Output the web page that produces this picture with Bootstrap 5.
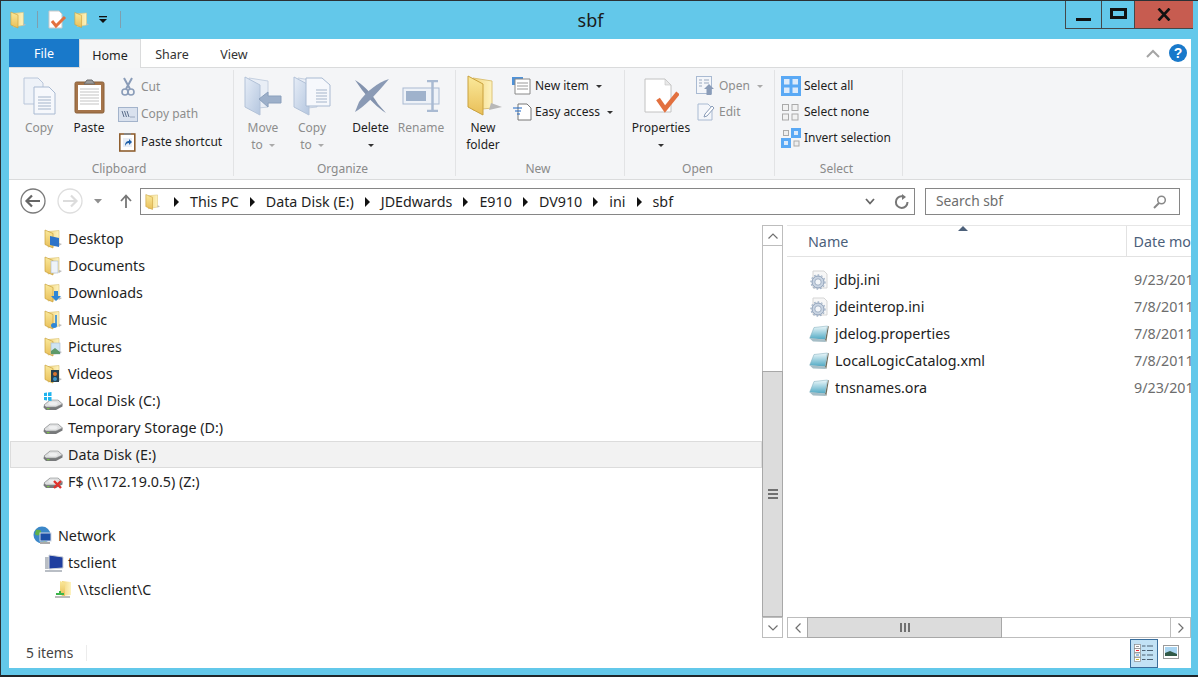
<!DOCTYPE html>
<html lang="en"><head><meta charset="utf-8"><title>sbf</title>
<link rel="stylesheet" href="https://cdn.jsdelivr.net/npm/bootstrap@5.3.0/dist/css/bootstrap.min.css">
<style>
html,body{margin:0;height:100%;overflow:hidden}
body{background:#63c8ea;font-family:"Noto Sans",sans-serif;color:#1e1e1e;font-size:12px}
svg{display:block;flex:none}
.wfr{width:1198px;height:677px;border-top:1px solid #2b3034;border-bottom:2px solid #20262a;border-left:1px solid #2b3034;padding:0 0 7px 8px}
.ttl{height:38px;padding-left:1px}
.qat{width:1055px}
.qsep{width:1px;height:17px;background:#7f9fae;margin-top:-1px}
.q1{margin-left:11px}.q2{margin-left:9px}.q3{margin-left:5px}.q4{margin-left:10px}.q5{margin-left:12px}
.ttxt{font-size:18px;color:#1b1b1b;width:1055px;text-align:center;margin-left:-1055px;padding-left:106px;line-height:38px}
.wb{height:28px;border-bottom:1px solid #44484a;border-left:1px solid #44484a;margin-top:-10px;margin-bottom:auto}
.wbm{width:36px}.wbx{width:33px}.wbc{width:59px;background:#c75c50}
.cli{width:1182px;height:629px;background:#fff}
.tabs{height:29px;border-bottom:1px solid #dadbdc;position:relative}
.tf{width:70px;height:28px;background:#1979ca;color:#fff;text-align:center;line-height:29px;font-size:12.5px}
.th{width:62px;height:29px;background:#f5f6f7;border:1px solid #dadbdc;border-bottom:0;text-align:center;line-height:31px;font-size:12.5px}
.tn{width:62px;text-align:center;line-height:31px;font-size:12.5px;color:#333}
.tr1{margin-left:auto;padding-right:4px;gap:9px}
.hlp{width:18px;height:18px;border-radius:50%;background:#1979ca;color:#fff;font:bold 14px/18px "Liberation Sans",sans-serif;text-align:center}
.rib{height:112px;background:#f4f5f7;border-bottom:1px solid #dadbdc}
.grp{border-right:1px solid #e2e3e5;margin:2px 0 3px;height:106px;flex:none}
.g1{width:225px}.g2{width:222px}.g3{width:169px}.g4{width:150px}.g5{width:128px}
.gb{height:90px;padding-top:2px}
.g1 .gb{padding-left:5px}.g2 .gb{padding-left:4px}.g3 .gb,.g4 .gb,.g5 .gb{padding-left:6px}
.g5 .gb{padding-top:3px}
.gl{height:16px;line-height:17px;text-align:center;color:#8a8a8a;font-size:12px;padding-right:4px}
.big{flex:none;text-align:center;line-height:17px;font-size:12px;color:#1e1e1e}
.big .ic{height:47px;display:flex;align-items:center;justify-content:center}
.dim{color:#8d8d8d}
.caret{display:inline-block;width:0;height:0;border:3px solid transparent;border-top:3px solid #333;border-bottom:0;vertical-align:middle;margin-left:3px}
.dim .caret{border-top-color:#aaa}
.b50{width:50px}.b48{width:48px}.b52{width:51px}.b42{width:42px}.b60{width:60px}
.del{margin-left:9px}
.nfi{margin-left:3px}
.smc{margin-left:4px;margin-top:1px}
.smn{margin-left:8px}.smo{margin-left:5px}
.smr{height:26px;gap:4px;line-height:26px;white-space:nowrap}
.g1 .smr{height:27.5px}
.smi{width:19px;display:flex;justify-content:center}
.adr{height:45px;padding:8px 11px 0 11px}
.abox{width:775px;height:27px;border:1px solid #868686;margin-left:120px;margin-right:10px;font-size:14.3px;padding-left:4px}
.sbox{width:255px;height:27px;border:1px solid #868686;padding:0 12px 0 10px;font-size:13.8px;color:#6d6d6d}
.cr{gap:11px;padding-left:14px}
.arw{width:0;height:0;border:5px solid transparent;border-left:5px solid #111;border-right:0}
.crt{margin-right:19px}
.nvb{position:absolute}
.nfw{margin-left:11px}.ndd{margin-left:11px}.nup{margin-left:18px}
.mid{height:413px}
.npn{width:753px;font-size:14.3px;color:#1e1e1e}
.nr{height:27px;width:752px;line-height:26px;padding-left:33px;white-space:nowrap;border:1px solid transparent;margin-left:1px}
.nic{width:24px;flex:none}
.nr.sl{background:#f2f2f2;border-color:#dcdcdc}
.nr.l0{padding-left:22px}
.nr.l0 .nic{width:25px}
.nr.l2{padding-left:43px}
.nr.gp{margin-top:27px}
.drv{margin-left:-1px}
.vsc{width:21px;height:413px}
.sbt{border:1px solid #bdbdbd;background:#fff;display:flex;align-items:center;justify-content:center;flex:none}
.vsb{width:21px;height:21px}
.vtr{height:125px;border-left:1px solid #bdbdbd;border-right:1px solid #bdbdbd}
.vth{height:247px;background:#dcdcdc;border:1px solid #a8a8a8;display:flex;align-items:center;justify-content:center}
.fpn{width:405px;margin-left:4px;overflow:hidden;font-size:14.3px}
.fhd{height:32px;border-top:1px solid #e6e6e6;border-bottom:1px solid #e2e2e2;position:relative;color:#4c607a}
.hn{width:341px;padding-left:21px;line-height:31px;border-right:1px solid #e2e2e2;height:30px}
.hd{padding-left:7px;line-height:31px;white-space:nowrap}
.srt{position:absolute;left:171px;top:0;width:0;height:0;border:5px solid transparent;border-top:0;border-bottom:5px solid #4c607a}
.fls{height:360px;padding-top:9px}
.fr{height:27px;line-height:26px;white-space:nowrap;color:#1e1e1e}
.fi{width:48px;padding-left:22px;flex:none}
.fnm{width:299px;flex:none}
.fdt{color:#6d6d6d}
.hsc{height:21px}
.hsb{width:21px;height:21px}
.hth{width:195px;height:21px;background:#dcdcdc;border:1px solid #a8a8a8;margin-left:-1px;display:flex;align-items:center;justify-content:center}
.htr{flex:1;border-top:1px solid #bdbdbd;border-bottom:1px solid #bdbdbd}
.grh{gap:2px}
.gr{width:2px;height:9px;background:#707070}
.gh{width:10px;height:2px;background:#707070}
.sts{height:30px;font-size:13.8px;color:#444;padding-left:17px}
.sit{width:60px;line-height:27px;height:29px}
.ssep{width:1px;height:16px;background:#ececec}
.vdt{width:28px;height:29px;background:#c2e2f5;border:1px solid #3a6e9c;display:flex;align-items:center;justify-content:center;margin-left:auto}
.vlg{width:26px;display:flex;justify-content:center;align-items:center;margin-right:7px;margin-top:-3px}
</style></head><body>
<svg width="0" height="0" style="position:absolute"><defs>
<linearGradient id="fg" x1="0" y1="0" x2="0" y2="1"><stop offset="0" stop-color="#fae99b"/><stop offset="1" stop-color="#e9bf58"/></linearGradient>
<linearGradient id="fb" x1="0" y1="0" x2="1" y2="0"><stop offset="0" stop-color="#f3d57a"/><stop offset="1" stop-color="#fdf3c0"/></linearGradient>
<linearGradient id="bg" x1="0" y1="0" x2="1" y2="1"><stop offset="0" stop-color="#e6edf7"/><stop offset="1" stop-color="#b4c6df"/></linearGradient>
<linearGradient id="ng" x1="0" y1="0" x2="0" y2="1"><stop offset="0" stop-color="#eef8fa"/><stop offset="1" stop-color="#4fa9c4"/></linearGradient>
<symbol id="fold" viewBox="0 0 18 20"><path d="M4 2.5 15 1.5V16L4 18Z" fill="url(#fb)" stroke="#e0c77c" stroke-width=".7"/><path d="M1 1 9 4.5V19L1 15.500Z" fill="url(#fg)" stroke="#c9a13e" stroke-width=".7"/><path d="M15 14l3 1-3 2z" fill="#bbb"/></symbol>
<symbol id="drive" viewBox="0 0 20 14"><path d="M1 8 7 3H15L19.500 7V9.500L13 13H3L.5 10.500Z" fill="#77797b"/><path d="M1 8 7 3H15L19.500 7 13 10H3Z" fill="#dfe0e1" stroke="#8b8d8f" stroke-width=".6"/><ellipse cx="10" cy="6.500" rx="4.500" ry="1.800" fill="#eeeff0"/><rect x="4" y="11" width="2.400" height="1.200" fill="#7ac24a"/></symbol>
<symbol id="ini" viewBox="0 0 20 20"><path d="M4 1H15L18 4V18H4Z" fill="#f7f7f7" stroke="#d5d5d5"/><circle cx="9" cy="12" r="6" fill="#c9d4e2" stroke="#8ea0b8"/><circle cx="9" cy="12" r="3.200" fill="#f2f5f9" stroke="#8ea0b8" stroke-width=".8"/><circle cx="9" cy="12" r="7" fill="none" stroke="#9fb0c6" stroke-width="1.300" stroke-dasharray="1.600 2"/></symbol>
<symbol id="note" viewBox="0 0 20 20"><path d="M19 2 19.800 2.400 17.300 18 16 16Z" fill="#6e6a58"/><path d="M5 3.500 18.500 2 16 15.500 .7 14.200Z" fill="url(#ng)" stroke="#79a9b8" stroke-width=".5"/><path d="M.8 14.400 16 15.600 17 18 4 17.500Z" fill="#a5bdc6"/></symbol>
</defs></svg>
<div class="wfr d-flex flex-column">
 <div class="ttl d-flex align-items-center">
  <div class="qat d-flex align-items-center flex-none">
   <svg width="16" height="20"><use href="#fold"/></svg>
   <div class="qsep q1"></div>
   <svg class="q2" width="22" height="20" viewBox="0 0 22 20"><path d="M2 1H12L15 4V18H2Z" fill="#fff" stroke="#c9c9c9"/><path d="M5 11 9 16 18 7" fill="none" stroke="#e2703f" stroke-width="3"/></svg>
   <svg width="15" height="20" class="q3"><use href="#fold"/></svg>
   <svg class="q4" width="9" height="8" viewBox="0 0 9 8"><rect x="0" y="0" width="8" height="1.300" fill="#111"/><path d="M0 3H8L4 7Z" fill="#111"/></svg>
   <div class="qsep q5"></div>
  </div>
  <div class="ttxt">sbf</div>
  <div class="d-flex wb-wrap">
   <div class="wb wbm d-flex align-items-center justify-content-center"><svg width="16" height="18" viewBox="0 0 16 18"><rect x="0" y="12" width="15" height="3" fill="#111"/></svg></div>
   <div class="wb wbx d-flex align-items-center justify-content-center"><svg width="17" height="14" viewBox="0 0 17 14"><rect x="1.500" y="1.500" width="14" height="8" fill="none" stroke="#111" stroke-width="3"/></svg></div>
   <div class="wb wbc d-flex align-items-center justify-content-center"><svg width="14" height="13" viewBox="0 0 14 13"><path d="M1.500 .5 12.500 12.500M12.500 .5 1.500 12.500" stroke="#111" stroke-width="2.600"/></svg></div>
  </div>
 </div>
 <div class="cli d-flex flex-column">
  <div class="tabs d-flex">
   <div class="tf">File</div><div class="th">Home</div><div class="tn">Share</div><div class="tn">View</div>
   <div class="tr1 d-flex align-items-center">
    <svg width="14" height="9" viewBox="0 0 14 9"><path d="M1 8 7 2 13 8" fill="none" stroke="#a5a5a5" stroke-width="2"/></svg>
    <div class="hlp">?</div>
   </div>
  </div>
  <div class="rib d-flex">
   <div class="grp g1"><div class="gb d-flex">
     <div class="big b50 dim"><div class="ic"><svg width="33" height="38" viewBox="0 0 33 38"><path d="M1 1H15L20 6V27H1Z" fill="#eef2f8" stroke="#b9c6da"/><path d="M11 10H26L32 16V37H11Z" fill="#f6f8fc" stroke="#a9bad2"/><path d="M15 20H28M15 23H28M15 26H28M15 29H28M15 32H28" stroke="#a4b4ca"/></svg></div>Copy</div>
     <div class="big b50"><div class="ic"><svg width="31" height="36" viewBox="0 0 31 36"><rect x="1" y="4" width="29" height="31" rx="1.500" fill="#a5744a" stroke="#8a6038"/><rect x="4" y="7" width="23" height="25" fill="#fff"/><path d="M6 11H25M6 14H25M6 17H25M6 20H25M6 23H25M6 26H25" stroke="#c3c3c3"/><path d="M10 6 13 2H18L21 6Z" fill="#9a9a9a" stroke="#6c6c6c"/></svg></div>Paste</div>
     <div class="smc">
      <div class="smr d-flex align-items-center dim"><div class="smi"><svg width="14" height="20" viewBox="0 0 14 20"><path d="M3 1 9 12M11 1 5 12" stroke="#8a9cb8" stroke-width="2"/><circle cx="4" cy="15" r="3" fill="none" stroke="#8a9cb8" stroke-width="1.600"/><circle cx="10" cy="15" r="3" fill="none" stroke="#8a9cb8" stroke-width="1.600"/></svg></div>Cut</div>
      <div class="smr d-flex align-items-center dim"><div class="smi"><svg width="20" height="15" viewBox="0 0 20 15"><rect x=".5" y=".5" width="19" height="14" fill="#d9e1ee" stroke="#a3b3cb"/><path d="M4 4 6 10M6.500 4 8.500 10M9 4 11 10" stroke="#5c6f8c"/><path d="M12.500 10H17" stroke="#5c6f8c" stroke-dasharray="1 1"/></svg></div>Copy path</div>
      <div class="smr d-flex align-items-center"><div class="smi"><svg width="17" height="20" viewBox="0 0 17 20"><rect x=".8" y="2" width="15" height="17" fill="#fff" stroke="#8f5f30" stroke-width="1.600"/><path d="M5 1H12V3H5Z" fill="#888"/><rect x="4" y="6" width="9" height="9" fill="#e8eef7"/><path d="M6 14C6 10 8 9 10 9V7L13 10 10 13V11C8 11 7 12 6 14Z" fill="#1d5fa8"/></svg></div>Paste shortcut</div>
     </div></div><div class="gl">Clipboard</div></div>
   <div class="grp g2"><div class="gb d-flex">
     <div class="big b50 dim"><div class="ic"><svg width="38" height="40" viewBox="0 0 38 40"><path d="M5 2 24 5V31L5 33Z" fill="#e9eef6" stroke="#c5d0e0"/><path d="M1 1 16 9V39L1 31Z" fill="url(#bg)" stroke="#b3c2d8"/><path d="M15 23 24 16V20H37V27H24V31Z" fill="#9db0ca" stroke="#8ba0bc"/></svg></div>Move<br>to <span class="caret"></span></div>
     <div class="big b48 dim"><div class="ic"><svg width="38" height="40" viewBox="0 0 38 40"><path d="M5 2 24 5V31L5 33Z" fill="#e9eef6" stroke="#c5d0e0"/><path d="M1 1 16 9V39L1 31Z" fill="url(#bg)" stroke="#b3c2d8"/><path d="M13 2H29L37 9V30H13Z" fill="#f6f8fc" stroke="#a9bad2"/><path d="M23 14H34M23 17H34M23 20H34M23 23H34M23 26H34" stroke="#a4b4ca"/></svg></div>Copy<br>to <span class="caret"></span></div>
     <div class="big b52 del"><div class="ic"><svg width="38" height="36" viewBox="0 0 38 36"><path d="M3 2C10 6 19 14 26 26L34 35C26 30 17 21 10 12Z" fill="#8393ae"/><path d="M37 1C26 4 14 14 7 24L3 34C12 29 24 16 31 8Z" fill="#8a9ab5"/></svg></div>Delete<br><span class="caret ms-0"></span></div>
     <div class="big b50 dim"><div class="ic"><svg width="38" height="32" viewBox="0 0 38 32"><rect x="1" y="8" width="36" height="16" fill="#eef2f8" stroke="#a9bad2"/><rect x="4" y="11" width="20" height="10" fill="#9fb2cc"/><path d="M25 1H36M25 31H36M30.500 1V31" stroke="#a9bad2" stroke-width="2.500"/></svg></div>Rename</div>
    </div><div class="gl">Organize</div></div>
   <div class="grp g3"><div class="gb d-flex">
     <div class="big b42"><div class="ic"><svg class="nfi" width="36" height="41" viewBox="0 0 36 41"><path d="M6 3 25 6V33L6 35Z" fill="url(#fb)" stroke="#dcc277"/><path d="M1 1 16 9V40L1 32Z" fill="url(#fg)" stroke="#c9a13e"/><path d="M24 28 35 32 22 35Z" fill="#b8b8b8"/></svg></div>New<br>folder</div>
     <div class="smc smn">
      <div class="smr d-flex align-items-center"><div class="smi"><svg width="19" height="18" viewBox="0 0 19 18"><rect x="0" y="0" width="11" height="8" fill="#4f92d8"/><path d="M3 2H18V17H3Z" fill="#fff" stroke="#888"/><path d="M5 6H16M5 9H16M5 12H16" stroke="#999"/></svg></div>New item <span class="caret"></span></div>
      <div class="smr d-flex align-items-center"><div class="smi"><svg width="20" height="18" viewBox="0 0 20 18"><path d="M6 1H15L19 5V17H6Z" fill="#fff" stroke="#777"/><path d="M1 5H10M3 8H9M5 11H8" stroke="#1c66c4" stroke-width="1.200"/></svg></div>Easy access <span class="caret"></span></div>
     </div></div><div class="gl">New</div></div>
   <div class="grp g4"><div class="gb d-flex">
     <div class="big b60"><div class="ic"><svg width="36" height="36" viewBox="0 0 36 36"><path d="M2 1H22L28 7V34H2Z" fill="#fff" stroke="#c2c2c2"/><path d="M22 1V7H28Z" fill="#e8e8e8" stroke="#c2c2c2" stroke-width=".6"/><path d="M15 21 22 31 35 15" fill="none" stroke="#e2703f" stroke-width="4.500"/></svg></div>Properties<br><span class="caret ms-0"></span></div>
     <div class="smc smo dim">
      <div class="smr d-flex align-items-center gap-1"><div class="smi"><svg width="19" height="20" viewBox="0 0 19 20"><rect x=".5" y=".5" width="15" height="17" fill="#f4f6fa" stroke="#a9bad2"/><path d="M3 4H6M8 4H13M3 7H6M8 7H13M3 10H6" stroke="#9aa9bf"/><path d="M8 13 13 8 18 13H15.500V19H10.500V13Z" fill="#8a9cb8"/></svg></div>Open <span class="caret"></span></div>
      <div class="smr d-flex align-items-center gap-1"><div class="smi"><svg width="18" height="18" viewBox="0 0 18 18"><path d="M1 1H11L15 5V17H1Z" fill="#f4f6fa" stroke="#a9bad2"/><path d="M7 14 8 11 15 3 17 5 10 13Z" fill="#fff" stroke="#8a9cb8"/></svg></div>Edit</div>
     </div></div><div class="gl">Open</div></div>
   <div class="grp g5"><div class="gb">
     <div class="smr d-flex align-items-center gap-1"><div class="smi"><svg width="20" height="20" viewBox="0 0 20 20"><rect width="20" height="20" fill="#5aa9f5"/><rect x="3" y="3" width="5.500" height="5.500" fill="#ddeafa"/><rect x="11.500" y="3" width="5.500" height="5.500" fill="#ddeafa"/><rect x="3" y="11.500" width="5.500" height="5.500" fill="#ddeafa"/><rect x="11.500" y="11.500" width="5.500" height="5.500" fill="#ddeafa"/></svg></div>Select all</div>
     <div class="smr d-flex align-items-center gap-1"><div class="smi"><svg width="17" height="17" viewBox="0 0 17 17"><g fill="#f2f2f2" stroke="#aaa"><rect x=".5" y=".5" width="6" height="6"/><rect x="10" y=".5" width="6" height="6"/><rect x=".5" y="10" width="6" height="6"/><rect x="10" y="10" width="6" height="6"/></g></svg></div>Select none</div>
     <div class="smr d-flex align-items-center gap-1"><div class="smi"><svg width="20" height="20" viewBox="0 0 20 20"><g fill="#eee" stroke="#aaa"><rect x="2.500" y="2.500" width="5" height="5"/><rect x="13" y="13" width="5" height="5"/></g><rect x="10" y="0" width="10" height="10" fill="#5aa9f5"/><rect x="0" y="10" width="10" height="10" fill="#5aa9f5"/><rect x="13" y="3" width="4" height="4" fill="#ddeafa"/><rect x="3" y="13" width="4" height="4" fill="#ddeafa"/></svg></div>Invert selection</div>
   </div><div class="gl">Select</div></div>
  </div>
  <div class="adr d-flex position-relative">
   <div class="nvb d-flex align-items-center">
    <svg width="26" height="26" viewBox="0 0 26 26"><circle cx="13" cy="13" r="12" fill="#fff" stroke="#7a7a7a" stroke-width="1.300"/><path d="M20 13H7M12 7.500 6.500 13 12 18.500" fill="none" stroke="#666" stroke-width="2.200"/></svg>
    <svg class="nfw" width="26" height="26" viewBox="0 0 26 26"><circle cx="13" cy="13" r="12" fill="#fff" stroke="#dedede" stroke-width="1.300"/><path d="M6 13H19M14 7.500 19.500 13 14 18.500" fill="none" stroke="#dcdcdc" stroke-width="2.200"/></svg>
    <svg class="ndd" width="8" height="5" viewBox="0 0 8 5"><path d="M0 0H8L4 4.500Z" fill="#8f8f8f"/></svg>
    <svg class="nup" width="12" height="14" viewBox="0 0 12 14"><path d="M6 14V2M1 7 6 1.500 11 7" fill="none" stroke="#777" stroke-width="1.800"/></svg>
   </div>
   <div class="abox d-flex align-items-center">
    <svg width="15" height="18"><use href="#fold"/></svg>
    <div class="cr d-flex align-items-center flex-grow-1"><span class="arw"></span><span>This PC</span><span class="arw"></span><span>Data Disk (E:)</span><span class="arw"></span><span>JDEdwards</span><span class="arw"></span><span>E910</span><span class="arw"></span><span>DV910</span><span class="arw"></span><span>ini</span><span class="arw"></span><span>sbf</span></div>
    <svg class="crt" width="10" height="7" viewBox="0 0 10 7"><path d="M1 1 5 5.500 9 1" fill="none" stroke="#666" stroke-width="1.800"/></svg>
    <svg class="me-1" width="16" height="16" viewBox="0 0 16 16"><path d="M13.500 8A5.800 5.800 0 1 1 8 2.300" fill="none" stroke="#777" stroke-width="2"/><path d="M8 0V6L12 3Z" fill="#777"/></svg>
   </div>
   <div class="sbox d-flex align-items-center justify-content-between">Search sbf<svg width="14" height="14" viewBox="0 0 14 14"><circle cx="8.500" cy="5" r="3.800" fill="none" stroke="#888" stroke-width="1.500"/><path d="M6 8 1 13" stroke="#888" stroke-width="2"/></svg></div>
  </div>
  <div class="mid d-flex">
   <div class="npn">
    <div class="nr d-flex align-items-center"><div class="nic"><svg width="18" height="20" viewBox="0 0 18 20"><use href="#fold"/><path d="M6 7 15 9V18L6 16Z" fill="#2d73c9"/></svg></div>Desktop</div>
    <div class="nr d-flex align-items-center"><div class="nic"><svg width="18" height="20" viewBox="0 0 18 20"><use href="#fold"/><rect x="7" y="5" width="7" height="12" fill="#eef3f9" stroke="#a9b8cc" stroke-width=".6"/></svg></div>Documents</div>
    <div class="nr d-flex align-items-center"><div class="nic"><svg width="18" height="20" viewBox="0 0 18 20"><use href="#fold"/><path d="M10 8H14V13H17L12 18 7 13H10Z" fill="#2d86d6"/></svg></div>Downloads</div>
    <div class="nr d-flex align-items-center"><div class="nic"><svg width="18" height="20" viewBox="0 0 18 20"><use href="#fold"/><path d="M12 5V15" stroke="#2d86d6" stroke-width="1.600"/><ellipse cx="10" cy="15.500" rx="3" ry="2.500" fill="#2d86d6"/></svg></div>Music</div>
    <div class="nr d-flex align-items-center"><div class="nic"><svg width="18" height="20" viewBox="0 0 18 20"><use href="#fold"/><rect x="7" y="6" width="9" height="11" fill="#cfe4f2" stroke="#a9b8cc" stroke-width=".6"/><path d="M7 14 11 11 16 15V17H7Z" fill="#5e9a6a"/></svg></div>Pictures</div>
    <div class="nr d-flex align-items-center"><div class="nic"><svg width="18" height="20" viewBox="0 0 18 20"><use href="#fold"/><rect x="7" y="6" width="8" height="12" fill="#26404f"/><circle cx="11" cy="10" r="2" fill="#d9742e"/><circle cx="11" cy="15" r="2" fill="#3f97c9"/></svg></div>Videos</div>
    <div class="nr d-flex align-items-center"><div class="nic"><svg class="drv" width="20" height="20" viewBox="0 0 20 20"><svg x="0" y="6" width="20" height="14" viewBox="0 0 20 14"><use href="#drive"/></svg><path d="M1 2 4 1.600V5H1ZM5 1.500 8.500 1V5H5ZM1 6H4V9.400L1 9ZM5 6H8.500V10L5 9.500Z" fill="#1fb4ee"/></svg></div>Local Disk (C:)</div>
    <div class="nr d-flex align-items-center"><div class="nic"><svg class="drv" width="20" height="14"><use href="#drive"/></svg></div>Temporary Storage (D:)</div>
    <div class="nr sl d-flex align-items-center"><div class="nic"><svg class="drv" width="20" height="14"><use href="#drive"/></svg></div>Data Disk (E:)</div>
    <div class="nr d-flex align-items-center"><div class="nic"><svg class="drv" width="20" height="16" viewBox="0 0 20 16"><svg x="0" y="1" width="20" height="14" viewBox="0 0 20 14"><use href="#drive"/></svg><path d="M11 7 18 14M18 7 11 14" stroke="#e0312c" stroke-width="2.400"/></svg></div>F$ (\\172.19.0.5) (Z:)</div>
    <div class="nr l0 gp d-flex align-items-center"><div class="nic"><svg width="19" height="20" viewBox="0 0 19 20"><circle cx="9" cy="9" r="8.500" fill="#3b87c9"/><path d="M3 4C6 3 9 4 8 7S3 10 2 8ZM10 11C13 10 15 13 12 16 10 16 9 13 10 11Z" fill="#5fb04a"/><rect x="7" y="7" width="11" height="8" fill="#1c4fa6" stroke="#cfd8e3"/><path d="M7 17H17" stroke="#aaa" stroke-width="2"/></svg></div>Network</div>
    <div class="nr d-flex align-items-center"><div class="nic"><svg width="20" height="18" viewBox="0 0 20 18"><path d="M1 3H8V15H1Z" fill="#b9bec5"/><path d="M5 1 19 3V14L5 15Z" fill="#1f3f9f" stroke="#cfd4da"/><path d="M1 16H18V18H1Z" fill="#b9bec5"/></svg></div>tsclient</div>
    <div class="nr l2 d-flex align-items-center"><div class="nic"><svg width="18" height="20" viewBox="0 0 18 20"><path d="M8 1 17 2V15L8 16Z" fill="url(#fb)"/><path d="M6 1 11 3V16L6 15Z" fill="url(#fg)"/><path d="M2 14H10M6 11V14" stroke="#3db54a" stroke-width="2"/><path d="M1 17H16" stroke="#bbb" stroke-width="2"/></svg></div>\\tsclient\C</div>
   </div>
   <div class="vsc d-flex flex-column">
    <div class="sbt vsb"><svg width="10" height="6" viewBox="0 0 10 6"><path d="M.5 5.500 5 1 9.500 5.500" fill="none" stroke="#707070" stroke-width="1.200"/></svg></div>
    <div class="vtr"></div>
    <div class="vth"><div class="d-flex flex-column grh"><div class="gh"></div><div class="gh"></div><div class="gh"></div></div></div>
    <div class="sbt vsb"><svg width="10" height="6" viewBox="0 0 10 6"><path d="M.5 .5 5 5 9.500 .5" fill="none" stroke="#707070" stroke-width="1.200"/></svg></div>
   </div>
   <div class="fpn d-flex flex-column">
    <div class="fhd d-flex"><span class="srt"></span><div class="hn">Name</div><div class="hd">Date mo</div></div>
    <div class="fls">
     <div class="fr d-flex align-items-center"><div class="fi"><svg width="20" height="20"><use href="#ini"/></svg></div><div class="fnm">jdbj.ini</div><div class="fdt">9/23/2011</div></div>
     <div class="fr d-flex align-items-center"><div class="fi"><svg width="20" height="20"><use href="#ini"/></svg></div><div class="fnm">jdeinterop.ini</div><div class="fdt">7/8/2011</div></div>
     <div class="fr d-flex align-items-center"><div class="fi"><svg width="20" height="20"><use href="#note"/></svg></div><div class="fnm">jdelog.properties</div><div class="fdt">7/8/2011</div></div>
     <div class="fr d-flex align-items-center"><div class="fi"><svg width="20" height="20"><use href="#note"/></svg></div><div class="fnm">LocalLogicCatalog.xml</div><div class="fdt">7/8/2011</div></div>
     <div class="fr d-flex align-items-center"><div class="fi"><svg width="20" height="20"><use href="#note"/></svg></div><div class="fnm">tnsnames.ora</div><div class="fdt">9/23/2011</div></div>
    </div>
    <div class="hsc d-flex">
     <div class="sbt hsb"><svg width="6" height="10" viewBox="0 0 6 10"><path d="M5.500 .5 1 5 5.500 9.500" fill="none" stroke="#707070" stroke-width="1.200"/></svg></div>
     <div class="hth"><div class="d-flex grh"><div class="gr"></div><div class="gr"></div><div class="gr"></div></div></div>
     <div class="htr"></div>
     <div class="sbt hsb"><svg width="6" height="10" viewBox="0 0 6 10"><path d="M.5 .5 5 5 .5 9.500" fill="none" stroke="#707070" stroke-width="1.200"/></svg></div>
    </div>
   </div>
  </div>
  <div class="sts d-flex align-items-center">
   <div class="sit">5 items</div><div class="ssep"></div>
   <div class="vdt"><svg width="20" height="18" viewBox="0 0 20 18"><g stroke="#888" fill="#fff" stroke-width=".7"><rect x=".5" y=".5" width="6" height="4"/><rect x=".5" y="4.500" width="6" height="4"/><rect x=".5" y="9" width="6" height="4"/><rect x=".5" y="13.500" width="6" height="4"/></g><rect x="2" y="2" width="3" height="1" fill="#999"/><rect x="2" y="6" width="3" height="1" fill="#e23"/><rect x="2" y="10.500" width="3" height="1" fill="#38c"/><rect x="2" y="15" width="3" height="1" fill="#cb3"/><path d="M8 2H11.500M13 2H19M8 6.500H11.500M13 6.500H19M8 11H11.500M13 11H19M8 15.500H11.500M13 15.500H19" stroke="#4d6173"/></svg></div>
   <div class="vlg"><svg width="16" height="14" viewBox="0 0 16 14"><rect x=".5" y=".5" width="15" height="13" fill="#fff" stroke="#9a9a9a"/><rect x="2" y="2" width="12" height="9" fill="#a9d5f2"/><path d="M2 8 7 6 14 9V11H2Z" fill="#315a48"/></svg></div>
  </div>
 </div>
</div>
</body></html>
